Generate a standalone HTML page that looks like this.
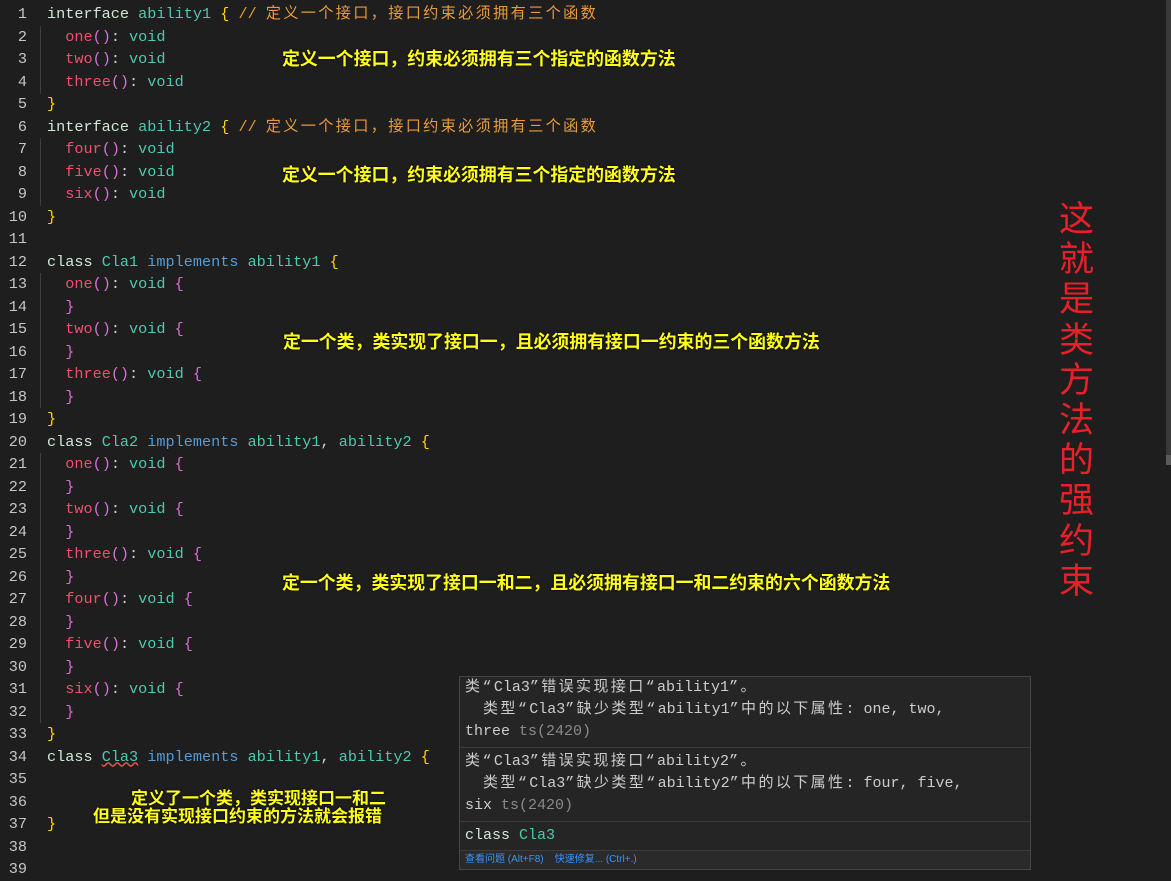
<!DOCTYPE html>
<html><head><meta charset="utf-8"><style>
body{margin:0;width:1171px;height:881px;background:#1e1e1e;overflow:hidden;position:relative;font-family:"Liberation Mono","Noto Sans CJK SC",monospace;}
.ln{position:absolute;left:0;width:27px;text-align:right;color:#c6c6c6;font-size:15.2px;line-height:22.5px;}
.c{position:absolute;left:47px;white-space:pre;font-size:15.2px;line-height:22.5px;color:#d4d4d4;}
.k{color:#cfe8d6}.t{color:#4ec9b0}.m{color:#f0506e}.p{color:#da70d6}.b{color:#ffd700}.i{color:#569cd6}.cm{color:#e89a3c}
.cz{letter-spacing:2.3px}
.z{letter-spacing:2.4px}
.g{position:absolute;left:47px;width:1px;background:#404040}
.a{position:absolute;color:#ffff1a;font-weight:bold;font-size:17.9px;font-family:"Liberation Sans","Noto Sans CJK SC",sans-serif;white-space:nowrap;line-height:22px;text-shadow:0 0 2px #000}
.red{position:absolute;left:1059px;top:200px;width:40px;color:#e8202a;font-size:35px;line-height:40.2px;font-family:"Liberation Sans","Noto Sans CJK SC",sans-serif;}
.tip{position:absolute;left:459px;top:676px;width:572px;height:194px;background:#252526;border:1px solid #454545;box-sizing:border-box;font-family:"Liberation Mono","Noto Sans CJK SC",monospace;font-size:15px;color:#cccccc;}
.tip .r{position:absolute;left:5px;white-space:pre;line-height:22px}
.sep{position:absolute;left:0;right:0;height:1px;background:#3c3c3c}
.gr{color:#8a8a8a}
</style></head><body>
<div class="ln" style="top:3px">1</div><div class="ln" style="top:25.5px">2</div><div class="ln" style="top:48px">3</div><div class="ln" style="top:70.5px">4</div><div class="ln" style="top:93px">5</div><div class="ln" style="top:115.5px">6</div><div class="ln" style="top:138px">7</div><div class="ln" style="top:160.5px">8</div><div class="ln" style="top:183px">9</div><div class="ln" style="top:205.5px">10</div><div class="ln" style="top:228px">11</div><div class="ln" style="top:250.5px">12</div><div class="ln" style="top:273px">13</div><div class="ln" style="top:295.5px">14</div><div class="ln" style="top:318px">15</div><div class="ln" style="top:340.5px">16</div><div class="ln" style="top:363px">17</div><div class="ln" style="top:385.5px">18</div><div class="ln" style="top:408px">19</div><div class="ln" style="top:430.5px">20</div><div class="ln" style="top:453px">21</div><div class="ln" style="top:475.5px">22</div><div class="ln" style="top:498px">23</div><div class="ln" style="top:520.5px">24</div><div class="ln" style="top:543px">25</div><div class="ln" style="top:565.5px">26</div><div class="ln" style="top:588px">27</div><div class="ln" style="top:610.5px">28</div><div class="ln" style="top:633px">29</div><div class="ln" style="top:655.5px">30</div><div class="ln" style="top:678px">31</div><div class="ln" style="top:700.5px">32</div><div class="ln" style="top:723px">33</div><div class="ln" style="top:745.5px">34</div><div class="ln" style="top:768px">35</div><div class="ln" style="top:790.5px">36</div><div class="ln" style="top:813px">37</div><div class="ln" style="top:835.5px">38</div><div class="ln" style="top:858px">39</div>

<div class="g" style="left:40px;top:26px;height:68px"></div>
<div class="g" style="left:40px;top:138px;height:68px"></div>
<div class="g" style="left:40px;top:273px;height:135px"></div>
<div class="g" style="left:40px;top:453px;height:270px"></div>

<div class="c" style="top:3px"><span class="k">interface</span> <span class="t">ability1</span> <span class="b">{</span> <span class="cm">// <span class="cz">定义一个接口，接口约束必须拥有三个函数</span></span></div>
<div class="c" style="top:25.5px">  <span class="m">one</span><span class="p">()</span>: <span class="t">void</span></div>
<div class="c" style="top:48px">  <span class="m">two</span><span class="p">()</span>: <span class="t">void</span></div>
<div class="c" style="top:70.5px">  <span class="m">three</span><span class="p">()</span>: <span class="t">void</span></div>
<div class="c" style="top:93px"><span class="b">}</span></div>
<div class="c" style="top:115.5px"><span class="k">interface</span> <span class="t">ability2</span> <span class="b">{</span> <span class="cm">// <span class="cz">定义一个接口，接口约束必须拥有三个函数</span></span></div>
<div class="c" style="top:138px">  <span class="m">four</span><span class="p">()</span>: <span class="t">void</span></div>
<div class="c" style="top:160.5px">  <span class="m">five</span><span class="p">()</span>: <span class="t">void</span></div>
<div class="c" style="top:183px">  <span class="m">six</span><span class="p">()</span>: <span class="t">void</span></div>
<div class="c" style="top:205.5px"><span class="b">}</span></div>
<div class="c" style="top:250.5px"><span class="k">class</span> <span class="t">Cla1</span> <span class="i">implements</span> <span class="t">ability1</span> <span class="b">{</span></div>
<div class="c" style="top:273px">  <span class="m">one</span><span class="p">()</span>: <span class="t">void</span> <span class="p">{</span></div>
<div class="c" style="top:295.5px">  <span class="p">}</span></div>
<div class="c" style="top:318px">  <span class="m">two</span><span class="p">()</span>: <span class="t">void</span> <span class="p">{</span></div>
<div class="c" style="top:340.5px">  <span class="p">}</span></div>
<div class="c" style="top:363px">  <span class="m">three</span><span class="p">()</span>: <span class="t">void</span> <span class="p">{</span></div>
<div class="c" style="top:385.5px">  <span class="p">}</span></div>
<div class="c" style="top:408px"><span class="b">}</span></div>
<div class="c" style="top:430.5px"><span class="k">class</span> <span class="t">Cla2</span> <span class="i">implements</span> <span class="t">ability1</span>, <span class="t">ability2</span> <span class="b">{</span></div>
<div class="c" style="top:453px">  <span class="m">one</span><span class="p">()</span>: <span class="t">void</span> <span class="p">{</span></div>
<div class="c" style="top:475.5px">  <span class="p">}</span></div>
<div class="c" style="top:498px">  <span class="m">two</span><span class="p">()</span>: <span class="t">void</span> <span class="p">{</span></div>
<div class="c" style="top:520.5px">  <span class="p">}</span></div>
<div class="c" style="top:543px">  <span class="m">three</span><span class="p">()</span>: <span class="t">void</span> <span class="p">{</span></div>
<div class="c" style="top:565.5px">  <span class="p">}</span></div>
<div class="c" style="top:588px">  <span class="m">four</span><span class="p">()</span>: <span class="t">void</span> <span class="p">{</span></div>
<div class="c" style="top:610.5px">  <span class="p">}</span></div>
<div class="c" style="top:633px">  <span class="m">five</span><span class="p">()</span>: <span class="t">void</span> <span class="p">{</span></div>
<div class="c" style="top:655.5px">  <span class="p">}</span></div>
<div class="c" style="top:678px">  <span class="m">six</span><span class="p">()</span>: <span class="t">void</span> <span class="p">{</span></div>
<div class="c" style="top:700.5px">  <span class="p">}</span></div>
<div class="c" style="top:723px"><span class="b">}</span></div>
<div class="c" style="top:745.5px"><span class="k">class</span> <span class="t" style="text-decoration:underline wavy #f14c4c">Cla3</span> <span class="i">implements</span> <span class="t">ability1</span>, <span class="t">ability2</span> <span class="b">{</span></div>
<div class="c" style="top:813px"><span class="b">}</span></div>

<div class="a" style="left:282px;top:48px">定义一个接口，约束必须拥有三个指定的函数方法</div>
<div class="a" style="left:282px;top:164px">定义一个接口，约束必须拥有三个指定的函数方法</div>
<div class="a" style="left:283px;top:331px">定一个类，类实现了接口一，且必须拥有接口一约束的三个函数方法</div>
<div class="a" style="left:282px;top:572px">定一个类，类实现了接口一和二，且必须拥有接口一和二约束的六个函数方法</div>
<div class="a" style="left:131px;top:788px;font-size:17px">定义了一个类，类实现接口一和二</div>
<div class="a" style="left:93px;top:806px;font-size:17px">但是没有实现接口约束的方法就会报错</div>

<div class="red">这就是类方法的强约束</div>
<div style="position:absolute;left:1166px;top:0;width:5px;height:465px;background:#3a3a3a"></div>
<div style="position:absolute;left:1166px;top:455px;width:5px;height:10px;background:#5a5a5a"></div>

<div class="tip">
<div class="r" style="top:0"><span class="z">类“</span>Cla3<span class="z">”错误实现接口“</span>ability1<span class="z">”。</span></div>
<div class="r" style="top:22px">  <span class="z">类型“</span>Cla3<span class="z">”缺少类型“</span>ability1<span class="z">”中的以下属性</span>: one, two,</div>
<div class="r" style="top:44px">three <span class="gr">ts(2420)</span></div>
<div class="sep" style="top:70px"></div>
<div class="r" style="top:74px"><span class="z">类“</span>Cla3<span class="z">”错误实现接口“</span>ability2<span class="z">”。</span></div>
<div class="r" style="top:96px">  <span class="z">类型“</span>Cla3<span class="z">”缺少类型“</span>ability2<span class="z">”中的以下属性</span>: four, five,</div>
<div class="r" style="top:118px">six <span class="gr">ts(2420)</span></div>
<div class="sep" style="top:144px"></div>
<div class="r" style="top:148px"><span class="k">class</span> <span class="t">Cla3</span></div>
<div class="sep" style="top:173px"></div>
<div style="position:absolute;left:0;right:0;top:174px;bottom:0;background:#2a2a2b"></div>
<div class="r" style="top:174px;font-size:10px;line-height:18px;color:#3794ff;font-family:'Liberation Sans','Noto Sans CJK SC',sans-serif">查看问题 (Alt+F8)&nbsp;&nbsp;&nbsp;&nbsp;快速修复... (Ctrl+.)</div>
</div>
</body></html>
